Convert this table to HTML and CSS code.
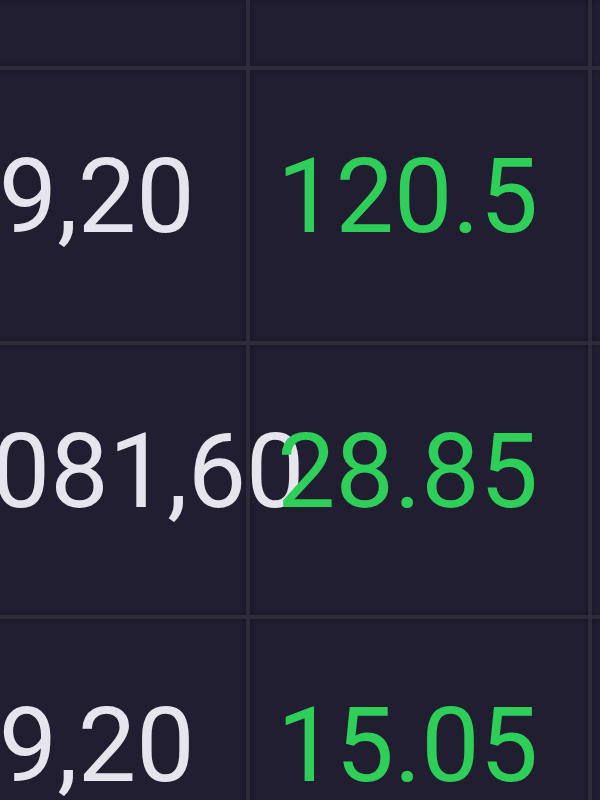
FILE: index.html
```html
<!DOCTYPE html>
<html>
<head>
    <title>Prices</title>
    <link rel="stylesheet" href="styles.css">
</head>
<body>
    <div class="sheet">
        <div class="cell head"></div>
        <div class="cell head"></div>
        <div class="cell head"></div>

        <div class="cell amount">1,459,20</div>
        <div class="cell change"><span>120.5</span></div>
        <div class="cell"></div>

        <div class="cell amount wide">12,4081,60</div>
        <div class="cell change"><span>28.85</span></div>
        <div class="cell"></div>

        <div class="cell amount">1,459,20</div>
        <div class="cell change"><span>15.05</span></div>
        <div class="cell"></div>
    </div>
</body>
</html>
```

FILE: styles.css
```css
body {
    margin: 0;
    overflow: hidden;
    background-color: #211e31;
    font-family: Roboto, "Liberation Sans", sans-serif;
}

/* the table is wider than the window, its left part is off screen */
.sheet {
    display: grid;
    grid-template-columns: 446px 338px 200px;
    grid-template-rows: 66px 271px 270px 300px;
    gap: 4px;
    margin-left: -200px;
    background-color: #2e2c3b;
    width: 992px;
}

.cell {
    background-color: #211e31;
    box-shadow: inset 0 0 5px rgba(10, 8, 18, 0.45);
    padding-top: 75px;
    font-size: 104px;
    line-height: 1;
    white-space: nowrap;
}

.head {
    padding-top: 0;
}

/* long values run on into the next column */
.amount {
    color: #e6e4ec;
    padding-left: 3px;
    z-index: 1;
}

.amount.wide {
    text-indent: -7px;
}

.change {
    color: #2ecf58;
    padding-left: 27px;
}

.change span {
    position: relative;
    z-index: 2;
}
```
